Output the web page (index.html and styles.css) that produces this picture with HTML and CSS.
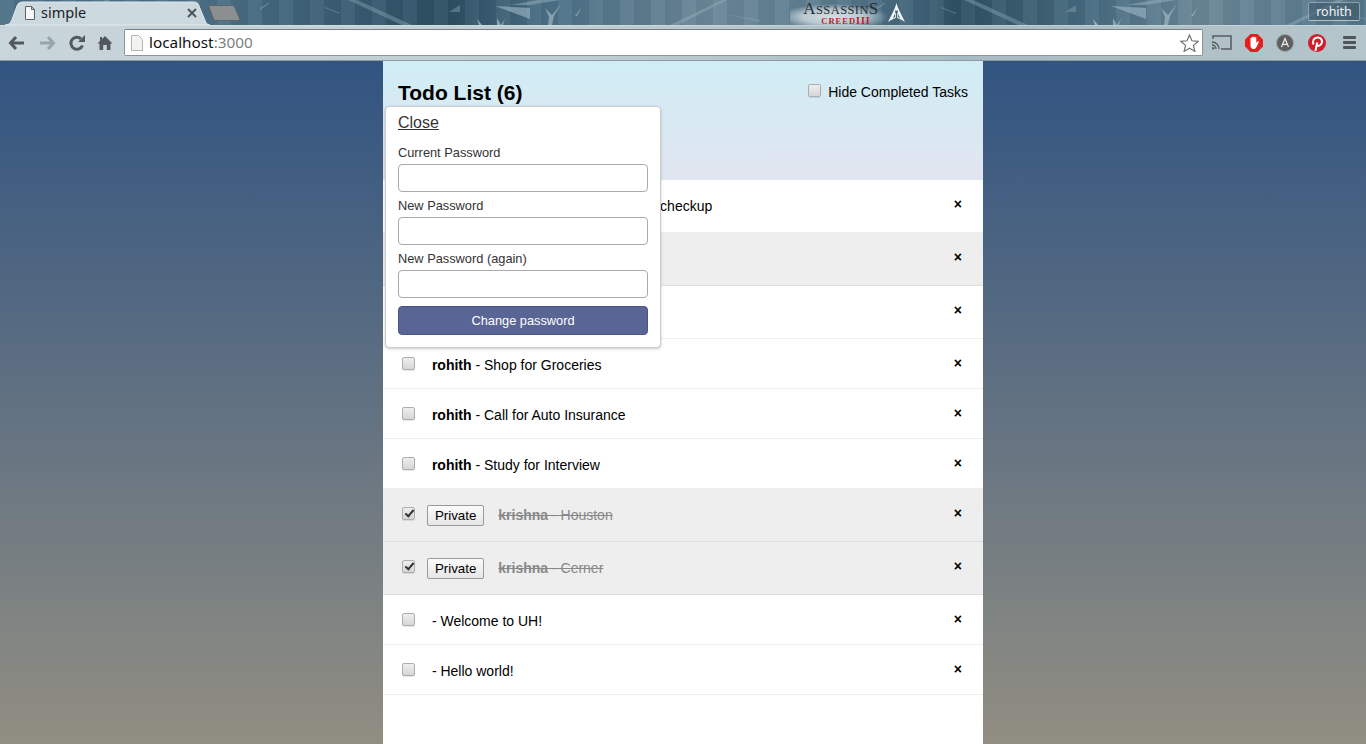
FILE: index.html

```html
<!DOCTYPE html>
<html lang="en">
<head>
    <meta charset="UTF-8">
    <meta name="viewport" content="width=device-width, initial-scale=1.0">
    <title>simple</title>
    <link rel="stylesheet" href="styles.css">
</head>
<body>
    <div id="browser">
        <div id="frame">
            <svg class="frame-art" width="1366" height="25" viewBox="0 0 1366 25">
                <defs>
                    <g id="shards">
                        <path d="M357 0 L412 25 L402 25 L348 0Z" fill="#86a3b2" opacity=".45"/>
                        <path d="M495 6 L530 8 L530 19Z" fill="#9db9c6" opacity=".6"/>
                        <path d="M510 5 L538 0 L560 0 L530 5Z" fill="#9db9c6" opacity=".45"/>
                        <path d="M545 8 L552 15 L561 4 L554 16 L552 25 L548 25 L549 17Z" fill="#b4cad4" opacity=".55"/>
                        <path d="M575 16 L582 7 L577 16Z" fill="#a9c2cd" opacity=".6"/>
                        <path d="M449 12 L460 5 L460 12Z" fill="#7d9aa9" opacity=".5"/>
                        <path d="M477 19 L482 25 L479 25Z" fill="#b4cad4" opacity=".7"/>
                        <path d="M497 18 L501 25 L505 19 L503 25 L497 25Z" fill="#b4cad4" opacity=".6"/>
                        <path d="M670 25 L722 0 L727 0 L678 25Z" fill="#94b0bd" opacity=".45"/>
                        <path d="M720 13 L760 20 L760 22Z" fill="#8fabb9" opacity=".35"/>
                        <path d="M260 8 L268 3 L270 3 L260 10Z" fill="#8fabb9" opacity=".45"/>
                        <path d="M325 7 L340 13 L340 14 L325 8Z" fill="#8fabb9" opacity=".45"/>
                    </g>
                </defs>
                <use href="#shards"/>
                <use href="#shards" x="616"/>
                <use href="#shards" x="-616"/>
            </svg>

            <div class="tab">
                <svg class="tab-shape" width="205" height="25" viewBox="0 0 205 25">
                    <path d="M0 25 C5 25 6 22 8 17 L12 6 C13 3 15 2 18 2 L188 2 C192 2 193 3 194 6 L199 18 C201 23 202 25 205 25Z" fill="#ccd9de" stroke="#e3ebee"/>
                </svg>
                <svg class="tab-page" width="12" height="14" viewBox="0 0 12 14">
                    <path d="M1.500 .5 H7.500 L10.500 3.500 V13.500 H1.500Z M7.500 .5 V3.500 H10.500" fill="#f4f6f7" stroke="#5b6468"/>
                </svg>
                <span class="tab-title">simple</span>
                <svg class="tab-close" width="10" height="10" viewBox="0 0 10 10">
                    <path d="M1 1 L9 9 M9 1 L1 9" stroke="#4e5558" stroke-width="2"/>
                </svg>
            </div>
            <svg class="new-tab" width="32" height="16" viewBox="0 0 32 16">
                <path d="M.5 .5 H24 C25 .5 26 1 26.500 2 L31.500 13 C32 15 31 15.500 30 15.500 H8 C7 15.500 6 15 5.500 14 Z" fill="#8b8f90" stroke="#59656b"/>
            </svg>

            <div class="theme-logo">
                <div class="logo-text">
                    <div class="logo-top"><span class="logo-cap">A</span>SSASSIN<span class="logo-cap">S</span></div>
                    <div class="logo-bottom">CREED<b>III</b></div>
                </div>
                <svg class="logo-mark" width="17" height="20" viewBox="0 0 17 20">
                    <path d="M8.500 0 C7 6 3 13 0 19 C3 17 6 15.500 7.800 15 L7.800 8 L9.200 8 L9.200 15 C11 15.500 14 17 17 19 C14 13 10 6 8.500 0Z M8.500 7 C8 9 6 13 4.500 15.500 C5.200 15 6 14.500 7 14 L7 7.500 L10 7.500 L10 14 C11 14.500 11.800 15 12.500 15.500 C11 13 9 9 8.500 7Z" fill="#f4f7f8" fill-rule="evenodd"/>
                </svg>
            </div>

            <div class="profile">rohith</div>
        </div>

        <div id="toolbar">
            <div class="nav-icons">
                <svg width="18" height="16" viewBox="0 0 18 16">
                    <path d="M8 2 L2.500 8 L8 14 M3 8 H16" fill="none" stroke="#52595c" stroke-width="3"/>
                </svg>
                <svg width="18" height="16" viewBox="0 0 18 16">
                    <path d="M10 2 L15.500 8 L10 14 M15 8 H2" fill="none" stroke="#98a6ab" stroke-width="3"/>
                </svg>
                <svg width="16" height="16" viewBox="0 0 16 16">
                    <path d="M13.500 10.500 A6 6 0 1 1 12 3.800" fill="none" stroke="#52595c" stroke-width="3"/>
                    <path d="M9 7 H16 V0Z" fill="#52595c"/>
                </svg>
                <svg width="16" height="16" viewBox="0 0 16 16">
                    <path d="M8 1 L15.500 8.500 L13.500 8.500 L13.500 15 L9.800 15 L9.800 10 L6.200 10 L6.200 15 L2.500 15 L2.500 8.500 L.5 8.500 L3 6 L3 2 L5 2 L5 4Z" fill="#52595c"/>
                </svg>
            </div>

            <div class="omnibox">
                <svg class="omni-page" width="12" height="16" viewBox="0 0 12 16">
                    <path d="M.5 .5 H7.500 L11.500 4.500 V15.500 H.5Z" fill="#f3f3f1" stroke="#b5b5b2"/>
                </svg>
                <span class="url">localhost<span class="url-port">:3000</span></span>
                <svg class="star" width="19" height="18" viewBox="0 0 19 18">
                    <path d="M9.500 1 L12 6.800 L18.200 7.300 L13.400 11.400 L14.900 17.400 L9.500 14.200 L4.100 17.400 L5.600 11.400 L.8 7.300 L7 6.800Z" fill="#fff" stroke="#6f7476" stroke-width="1.200"/>
                </svg>
            </div>

            <div class="ext-icons">
                <svg width="20" height="15" viewBox="0 0 20 15">
                    <path d="M1 4 V1 H19 V14 H9" fill="none" stroke="#555c5f" stroke-width="1.500"/>
                    <path d="M0 7 A7 7 0 0 1 7 14 M0 10 A4 4 0 0 1 4 14" fill="none" stroke="#555c5f" stroke-width="1.300"/>
                    <circle cx="1.200" cy="13.200" r="1.200" fill="#555c5f"/>
                </svg>
                <svg width="18" height="18" viewBox="0 0 18 18">
                    <path d="M5.500 0 H12.500 L18 5.500 V12.500 L12.500 18 H5.500 L0 12.500 V5.500Z" fill="#e3201f"/>
                    <path d="M5.500 8 V4.500 C5.500 3.500 6.800 3.500 6.800 4.500 V3.500 C6.800 2.500 8.300 2.500 8.300 3.500 V3.300 C8.300 2.300 9.800 2.300 9.800 3.300 V4 C9.800 3 11.300 3 11.300 4 V9 L12.500 7.500 C13.200 6.800 14.200 7.500 13.700 8.300 L11.500 13 C10.800 14.500 9.800 15 8.500 15 C6.500 15 5.500 13.500 5.500 12Z" fill="#fff"/>
                </svg>
                <svg width="18" height="18" viewBox="0 0 18 18">
                    <circle cx="9" cy="9" r="8.500" fill="#5f5f5f" stroke="#9aa3a6"/>
                    <path d="M5.500 13 L9 4.500 L12.500 13 M6.800 10.300 H11.200" fill="none" stroke="#eee" stroke-width="1.200"/>
                </svg>
                <svg class="ext-pinterest" width="18" height="18" viewBox="0 0 18 18">
                    <circle cx="9" cy="9" r="9" fill="#cf1f2e"/>
                    <path d="M7.400 17 L9.300 8.500 M5.600 10.500 C3.800 7 6 3.500 9.700 3.500 C13 3.500 14.500 6 13.800 8.700 C13 12 9.500 12.700 8.300 10.500" fill="none" stroke="#fff" stroke-width="2"/>
                </svg>
                <div class="menu-icon"><span></span><span></span><span></span></div>
            </div>
        </div>
    </div>

    <div id="page">
        <div class="container">
            <header>
                <h1>Todo List (6)</h1>
                <label class="hide-completed"><input type="checkbox"> Hide Completed Tasks</label>
                <div class="login-buttons">rohith &#9662;</div>
                <form class="new-task">
                    <input type="text" placeholder="Type to add new tasks">
                </form>
                <div class="login-dropdown">
                    <a class="close-link" href="#">Close</a>
                    <label class="field-label" for="old-password">Current Password</label>
                    <input class="field" id="old-password" type="password">
                    <label class="field-label" for="new-password">New Password</label>
                    <input class="field" id="new-password" type="password">
                    <label class="field-label" for="new-password-again">New Password (again)</label>
                    <input class="field" id="new-password-again" type="password">
                    <button class="change-password">Change password</button>
                </div>
            </header>
            <ul>
                <li>
                    <button class="delete">&times;</button>
                    <input type="checkbox">
                    <button class="toggle-private">Private</button>
                    <span class="text"><strong>rohith</strong> - Schedule vehicle checkup</span>
                </li>
                <li class="checked private">
                    <button class="delete">&times;</button>
                    <input type="checkbox" checked>
                    <button class="toggle-private">Private</button>
                    <span class="text"><strong>rohith</strong> - Pay the bills</span>
                </li>
                <li>
                    <button class="delete">&times;</button>
                    <input type="checkbox">
                    <button class="toggle-private">Private</button>
                    <span class="text"><strong>rohith</strong> - Clean the house</span>
                </li>
                <li>
                    <button class="delete">&times;</button>
                    <input type="checkbox">
                    <span class="text"><strong>rohith</strong> - Shop for Groceries</span>
                </li>
                <li>
                    <button class="delete">&times;</button>
                    <input type="checkbox">
                    <span class="text"><strong>rohith</strong> - Call for Auto Insurance</span>
                </li>
                <li>
                    <button class="delete">&times;</button>
                    <input type="checkbox">
                    <span class="text"><strong>rohith</strong> - Study for Interview</span>
                </li>
                <li class="checked private">
                    <button class="delete">&times;</button>
                    <input type="checkbox" checked>
                    <button class="toggle-private">Private</button>
                    <span class="text"><strong>krishna</strong> - Houston</span>
                </li>
                <li class="checked private">
                    <button class="delete">&times;</button>
                    <input type="checkbox" checked>
                    <button class="toggle-private">Private</button>
                    <span class="text"><strong>krishna</strong> - Cerner</span>
                </li>
                <li>
                    <button class="delete">&times;</button>
                    <input type="checkbox">
                    <span class="text"><strong></strong> - Welcome to UH!</span>
                </li>
                <li>
                    <button class="delete">&times;</button>
                    <input type="checkbox">
                    <span class="text"><strong></strong> - Hello world!</span>
                </li>
            </ul>
        </div>
    </div>
</body>
</html>
```

FILE: styles.css

```css
html, body {
    height: 100%;
}
body {
    font-family: 'Liberation Sans', Arial, sans-serif;
    font-size: 14px;
    margin: 0;
    padding: 0;
    display: flex;
    flex-direction: column;
    overflow: hidden;
}

/* browser window */
#browser {
    flex: none;
    font-family: 'Noto Sans', sans-serif;
}
#frame {
    position: relative;
    height: 25px;
    background-color: #40657c;
    background-image:
        repeating-linear-gradient(90deg, rgba(255, 255, 255, 0.04) 0 14px, rgba(0, 0, 0, 0.04) 14px 31px),
        linear-gradient(90deg, #4d7186 0, #4a6f85 16%, #2d4e63 33%, #4a6f85 40%, #6b8798 52%, #5d7e91 60%, #3d6075 68%, #2f5064 70%, #486c81 80%, #6a8797 88%, #54778b 100%);
}
.frame-art {
    position: absolute;
    left: 0;
    top: 0;
}
.tab {
    position: absolute;
    left: 5px;
    top: 0;
    width: 205px;
    height: 25px;
    display: flex;
    align-items: center;
}
.tab-shape {
    position: absolute;
    left: 0;
    top: 0;
}
.tab-page {
    position: relative;
    margin-left: 19px;
    margin-top: 1px;
}
.tab-title {
    position: relative;
    margin-left: 5px;
    margin-bottom: 2px;
    font-size: 14.5px;
    color: #1c2224;
}
.tab-close {
    position: relative;
    margin-left: auto;
    margin-right: 13px;
    margin-top: 1px;
}
.new-tab {
    position: absolute;
    left: 208px;
    top: 5px;
}
.theme-logo {
    position: absolute;
    left: 790px;
    top: 0;
    width: 120px;
    height: 25px;
    display: flex;
    align-items: flex-start;
    padding-left: 13px;
    box-sizing: border-box;
    background: radial-gradient(ellipse 55px 13px at 43px 17px, #d5dfe3 0, #b9c9d1 55%, rgba(150, 175, 190, 0) 100%);
}
.logo-text {
    width: 76px;
    font-family: 'Liberation Serif', serif;
    text-align: center;
}
.logo-top {
    font-size: 12.5px;
    line-height: 17px;
    height: 17px;
    color: #2b2b30;
    letter-spacing: 0.4px;
    white-space: nowrap;
}
.logo-cap {
    font-size: 17px;
}
.logo-bottom {
    font-size: 8.5px;
    line-height: 8px;
    height: 8px;
    color: #c0222c;
    font-weight: bold;
    letter-spacing: 1px;
    padding-left: 10px;
    white-space: nowrap;
}
.logo-bottom b {
    font-size: 10px;
}
.logo-mark {
    margin-left: 9px;
    margin-top: 3px;
}
.profile {
    position: absolute;
    right: 6px;
    top: 2px;
    width: 50px;
    height: 17px;
    border: 1px solid rgba(225, 235, 240, 0.45);
    border-bottom-color: rgba(225, 235, 240, 0.7);
    border-radius: 2px;
    color: #eef3f5;
    font-size: 12.5px;
    line-height: 17px;
    text-align: center;
    background: rgba(60, 85, 100, 0.55);
}
#toolbar {
    height: 36px;
    box-sizing: border-box;
    display: flex;
    align-items: center;
    background: linear-gradient(90deg, #c8d5da 0, #c0cfd5 40%, #a9bbc2 70%, #b4c5cb 100%);
    border-bottom: 1px solid #8f9a9e;
    box-shadow: inset 0 1px 0 rgba(255, 255, 255, 0.25);
}
.nav-icons {
    flex: none;
    width: 124px;
    box-sizing: border-box;
    padding-left: 8px;
    padding-right: 11px;
    display: flex;
    align-items: center;
    justify-content: space-between;
}
.omnibox {
    flex: 1;
    height: 27px;
    box-sizing: border-box;
    display: flex;
    align-items: center;
    background: #fff;
    border: 1px solid #8d9598;
    border-top-color: #777f82;
    border-radius: 2px;
    padding-left: 6px;
    padding-right: 3px;
}
.url {
    margin-left: 6px;
    margin-bottom: 2px;
    font-size: 15.3px;
    color: #111;
}
.url-port {
    color: #7b7f82;
}
.star {
    margin-left: auto;
}
.ext-icons {
    flex: none;
    width: 163px;
    box-sizing: border-box;
    padding-left: 9px;
    display: flex;
    align-items: center;
    gap: 13px;
}
.ext-pinterest {
    margin-left: 1px;
}
.menu-icon {
    width: 13px;
    margin-left: 4px;
    display: flex;
    flex-direction: column;
    gap: 2px;
}
.menu-icon span {
    height: 3px;
    background: #4f5659;
    border-radius: 1px;
}

/* page */
#page {
    flex: 1;
    min-height: 0;
    background-color: #315481;
    background-image: linear-gradient(to bottom, #315481, #918e82 100%);
}
.container {
    max-width: 600px;
    height: 100%;
    margin: 0 auto;
    background: white;
}
header {
    position: relative;
    z-index: 1;
    height: 119px;
    box-sizing: border-box;
    background: #d2edf4;
    background-image: linear-gradient(to bottom, #d0edf5, #e1e5f0 100%);
    padding: 20px 15px 15px 15px;
}
h1 {
    font-size: 1.5em;
    margin: 0 1em 10px 0;
    display: inline-block;
}
.hide-completed {
    float: right;
}
.login-buttons {
    display: block;
}
.new-task {
    margin-top: 10px;
}
.new-task input {
    box-sizing: border-box;
    padding: 10px 0;
    background: transparent;
    border: none;
    width: 100%;
    font-size: 1em;
}
.login-dropdown {
    position: absolute;
    left: 2px;
    top: 45px;
    width: 276px;
    height: 242px;
    box-sizing: border-box;
    padding: 5px 12px 0;
    background: #fff;
    border: 1px solid #ccc;
    border-radius: 4px;
    box-shadow: 0 1px 3px rgba(0, 0, 0, 0.2);
    color: #333;
}
.close-link {
    display: block;
    font-size: 16px;
    line-height: 22px;
    color: #333;
    margin-bottom: 11px;
}
.field-label {
    display: block;
    font-size: 12.8px;
    line-height: 15px;
    margin-bottom: 4px;
}
.field {
    display: block;
    width: 250px;
    height: 28px;
    box-sizing: border-box;
    border: 1px solid #aaa;
    border-radius: 4px;
    background: #fff;
    margin-bottom: 6px;
}
.change-password {
    display: block;
    width: 250px;
    height: 29px;
    margin-top: 8px;
    box-sizing: border-box;
    background: #596595;
    border: 1px solid #4a5580;
    border-radius: 4px;
    color: #fff;
    font-family: inherit;
    font-size: 12.8px;
}

/* task list */
ul {
    margin: 0;
    padding: 0;
    background: white;
}
li {
    position: relative;
    list-style: none;
    padding: 15px;
    border-bottom: #eee solid 1px;
}
li .text {
    margin-left: 10px;
}
li.checked {
    color: #888;
}
li.checked .text {
    text-decoration: line-through;
}
li.private {
    background: #eee;
    border-color: #ddd;
}
.delete {
    float: right;
    font-weight: bold;
    background: none;
    font-size: 1em;
    border: none;
    padding: 1px 6px;
    font-family: inherit;
    color: #000;
}
input[type="checkbox"] {
    appearance: none;
    -webkit-appearance: none;
    position: relative;
    width: 13px;
    height: 13px;
    box-sizing: border-box;
    margin: 3px 3px 3px 4px;
    vertical-align: -3px;
    background: linear-gradient(to bottom, #eee, #d6d6d6);
    border: 1px solid #aeaeae;
    border-radius: 2px;
    box-shadow: 0 1px 1px rgba(0, 0, 0, 0.1);
}
input[type="checkbox"]:checked::after {
    content: "";
    position: absolute;
    left: 3.5px;
    top: 0;
    width: 3px;
    height: 7px;
    border: solid #333;
    border-width: 0 2px 2px 0;
    transform: rotate(40deg);
}
.toggle-private {
    margin-left: 5px;
    padding: 1px 7px;
    height: 21px;
    box-sizing: border-box;
    font-family: inherit;
    font-size: 13.33px;
    color: #000;
    background: linear-gradient(to bottom, #fbfbfb, #e6e6e6);
    border: 1px solid #9a9a9a;
    border-radius: 2px;
}
```
